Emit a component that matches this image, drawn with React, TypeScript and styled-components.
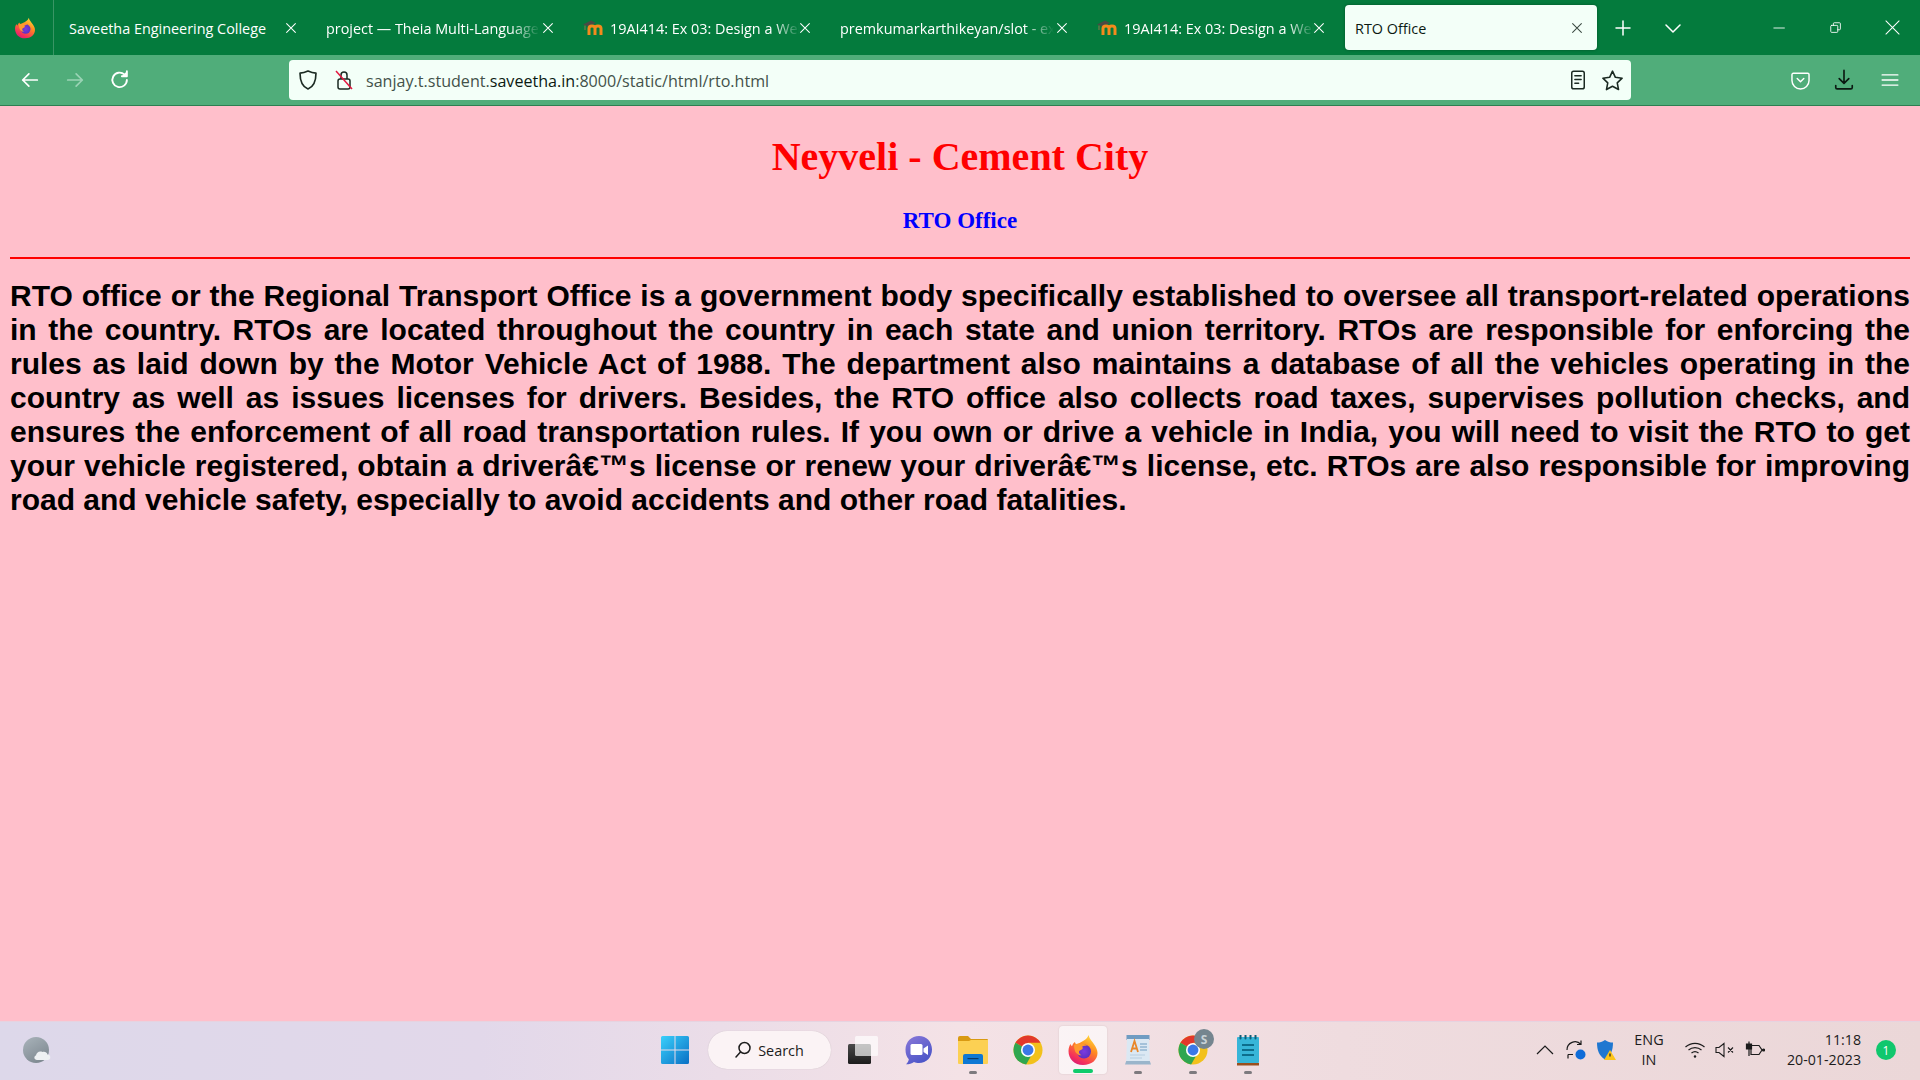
import styled, { createGlobalStyle } from "styled-components";
import { ReactNode } from "react";

const GlobalStyle = createGlobalStyle`
  html, body {
    margin: 0;
    padding: 0;
    height: 100%;
    overflow: hidden;
  }
`;

const UI_FONT = `"Open Sans", "Noto Sans", sans-serif`;

const Screen = styled.div`
  display: flex;
  flex-direction: column;
  width: 1920px;
  height: 1080px;
  font-family: ${UI_FONT};
`;

const TabStrip = styled.div`
  display: flex;
  align-items: flex-start;
  height: 55px;
  background-color: #047b3d;
  flex-shrink: 0;
`;

const BrandCell = styled.div`
  display: flex;
  align-items: center;
  justify-content: center;
  width: 50px;
  height: 55px;
  padding-right: 3px;
  margin-right: 3px;
  border-right: 1px solid #3a9565;
`;

const Tab = styled.div<{ $active?: boolean }>`
  position: relative;
  display: flex;
  align-items: center;
  width: ${({ $active }) => ($active ? "252px" : "257px")};
  height: 45px;
  margin-top: 5px;
  margin-left: ${({ $active }) => ($active ? "3px" : "0")};
  padding-left: ${({ $active }) => ($active ? "10px" : "12px")};
  padding-top: 1px;
  box-sizing: border-box;
  color: ${({ $active }) => ($active ? "#0b1a12" : "#fff")};
  background-color: ${({ $active }) => ($active ? "#f3fff8" : "transparent")};
  border-radius: 4px;
  box-shadow: ${({ $active }) => ($active ? "0 0 3px rgba(0,0,0,.35)" : "none")};
  font-size: 14.4px;
  flex-shrink: 0;
`;

const TabFavicon = styled.span`
  display: flex;
  margin-right: 7px;
`;

const TabTitle = styled.span<{ $width?: number }>`
  display: block;
  width: ${({ $width }) => ($width ? `${$width}px` : "auto")};
  overflow: hidden;
  white-space: nowrap;
  ${({ $width }) =>
    $width
      ? `-webkit-mask-image: linear-gradient(to right, #000 86%, transparent 100%);
         mask-image: linear-gradient(to right, #000 86%, transparent 100%);`
      : ""}
`;

const TabClose = styled.span<{ $active?: boolean }>`
  position: absolute;
  left: ${({ $active }) => ($active ? "225px" : "227px")};
  top: 16px;
  display: flex;
`;

const StripButton = styled.div<{ $width: number }>`
  display: flex;
  align-items: center;
  justify-content: center;
  width: ${({ $width }) => $width}px;
  height: 45px;
  margin-top: 5px;
  flex-shrink: 0;
`;

const StripSpacer = styled.div`
  flex: 1;
`;

const WindowButton = styled.div`
  display: flex;
  align-items: center;
  justify-content: center;
  width: 56px;
  height: 55px;
`;

const Toolbar = styled.div`
  display: flex;
  align-items: center;
  height: 51px;
  padding: 0 8px;
  box-sizing: border-box;
  background-color: #50ad7a;
  border-bottom: 1px solid #2d7f52;
  flex-shrink: 0;
`;

const NavButton = styled.div`
  display: flex;
  align-items: center;
  justify-content: center;
  width: 44px;
  height: 40px;
  margin-right: 1px;
  flex-shrink: 0;
`;

const UrlBar = styled.div`
  display: flex;
  align-items: center;
  width: 1342px;
  height: 40px;
  margin-left: 146px;
  margin-right: 147px;
  padding: 0 2px 0 7px;
  box-sizing: border-box;
  background-color: #f3fff8;
  border-radius: 4px;
  flex-shrink: 0;
`;

const UrlIcon = styled.div<{ $width: number; $gap?: number }>`
  display: flex;
  align-items: center;
  justify-content: center;
  width: ${({ $width }) => $width}px;
  margin-left: ${({ $gap }) => $gap ?? 0}px;
  flex-shrink: 0;
`;

const UrlText = styled.div`
  flex: 1;
  margin-left: 4px;
  padding-top: 2px;
  color: #43524a;
  font-size: 16.1px;
  white-space: nowrap;

  strong {
    color: #0b1a12;
    font-weight: 400;
  }
`;

const ToolbarButton = styled.div`
  display: flex;
  align-items: center;
  justify-content: center;
  width: 44px;
  height: 40px;
  flex-shrink: 0;

  &:last-child {
    margin-left: 2px;
  }
`;

const Page = styled.main`
  flex: 1;
  padding: 0 10px;
  overflow: hidden;
  background-color: #ffbfcb;
  color: #000;
`;

const Heading = styled.h1`
  margin: 28px 0 27px;
  color: #f00;
  font-family: "Liberation Serif", serif;
  font-size: 40px;
  font-weight: 700;
  line-height: 46px;
  text-align: center;
`;

const SubHeading = styled.h2`
  margin: 0 0 23px;
  color: #00f;
  font-family: "Liberation Serif", serif;
  font-size: 23px;
  font-weight: 700;
  line-height: 27px;
  text-align: center;
`;

const Rule = styled.hr`
  height: 2px;
  margin: 0 0 20px;
  padding: 0;
  background-color: #f00;
  border: none;
`;

const Paragraph = styled.p`
  margin: 0;
  font-family: "Liberation Sans", Arial, sans-serif;
  font-size: 30px;
  font-weight: 700;
  line-height: 34px;
  text-align: justify;
`;

const Taskbar = styled.footer`
  display: grid;
  grid-template-columns: 1fr auto 1fr;
  align-items: center;
  height: 59px;
  padding-bottom: 2px;
  background: linear-gradient(90deg, #ddd8ea 0%, #e2d8ea 25%, #f4e2e6 50%, #efdcdf 70%, #ebd7d8 100%);
  border-top: 1px solid #e6d3e0;
  box-sizing: border-box;
  flex-shrink: 0;
`;

const TaskLeft = styled.div`
  display: flex;
  align-items: center;
  padding-left: 23px;
`;

const TaskCenter = styled.div`
  display: flex;
  align-items: center;
  gap: 7px;
  margin-left: 2px;
`;

const TaskIcon = styled.div<{ $active?: boolean; $running?: boolean }>`
  position: relative;
  display: flex;
  align-items: center;
  justify-content: center;
  width: 48px;
  height: 48px;
  border-radius: 4px;
  background-color: ${({ $active }) => ($active ? "rgba(255,255,255,.62)" : "transparent")};
  box-shadow: ${({ $active }) => ($active ? "0 0 2px rgba(0,0,0,.12)" : "none")};

  &::after {
    content: "";
    display: ${({ $running }) => ($running ? "block" : "none")};
    position: absolute;
    left: 50%;
    bottom: ${({ $active }) => ($active ? "1px" : "0")};
    width: ${({ $active }) => ($active ? "20px" : "8px")};
    height: ${({ $active }) => ($active ? "4px" : "3px")};
    transform: translateX(-50%);
    border-radius: 2px;
    background-color: ${({ $active }) => ($active ? "#0ecb6b" : "#7d7a7e")};
  }
`;

const IconBadge = styled.svg`
  position: absolute;
  right: 3px;
  top: 3px;
`;

const SearchPill = styled.div`
  display: flex;
  align-items: center;
  justify-content: center;
  gap: 6px;
  width: 123px;
  height: 38px;
  margin-left: 2px;
  margin-right: 1px;
  color: #1c1c1c;
  font-size: 14.4px;
  background-color: #fbf3f5;
  border-radius: 19px;
  box-shadow: 0 0 1px rgba(0,0,0,.2);
`;

const TaskRight = styled.div`
  display: flex;
  align-items: center;
  justify-content: flex-end;
  padding-right: 24px;
  color: #1c1c1c;
`;

const TrayIcon = styled.div<{ $width: number; $gap?: number }>`
  display: flex;
  align-items: center;
  justify-content: center;
  width: ${({ $width }) => $width}px;
  height: 32px;
  margin-left: ${({ $gap }) => $gap ?? 0}px;
  flex-shrink: 0;
`;

const Lang = styled.div`
  width: 48px;
  margin: 0 10px 0 4px;
  font-size: 14.4px;
  line-height: 20px;
  text-align: center;
`;

const Clock = styled.div`
  margin-left: 20px;
  font-size: 14.2px;
  line-height: 20px;
  text-align: right;
`;

const Badge = styled.div`
  display: flex;
  align-items: center;
  justify-content: center;
  width: 20px;
  height: 20px;
  margin-left: 15px;
  color: #fff;
  font-size: 12px;
  background-color: #10c76d;
  border-radius: 50%;
`;

function Stroke({ size = 16, color = "#fff", width = 1.5, children }: { size?: number; color?: string; width?: number; children: ReactNode }) {
  return (
    <svg width={size} height={size} viewBox="0 0 16 16" fill="none" stroke={color} strokeWidth={width} strokeLinecap="round" strokeLinejoin="round">
      {children}
    </svg>
  );
}

function CloseIcon({ color = "#fff" }: { color?: string }) {
  return (
    <Stroke size={14} color={color} width={1.2}>
      <path d="M3 3l10 10M13 3L3 13" />
    </Stroke>
  );
}

function FirefoxIcon({ size, id }: { size: number; id: string }) {
  return (
    <svg width={size} height={size} viewBox="0 0 32 32">
      <defs>
        <linearGradient id={`${id}a`} x1="0.8" y1="0" x2="0.25" y2="1">
          <stop offset="0" stopColor="#ffe13d" />
          <stop offset="0.4" stopColor="#ff8a20" />
          <stop offset="0.8" stopColor="#f5325a" />
          <stop offset="1" stopColor="#d91a78" />
        </linearGradient>
        <radialGradient id={`${id}b`} cx="0.5" cy="0.5" r="0.55">
          <stop offset="0" stopColor="#7a3be0" />
          <stop offset="1" stopColor="#5a2fc0" />
        </radialGradient>
      </defs>
      <path d="M21.500 1c.8 4 4 6.500 6 10 1.500 2.500 3 4.500 3 8 0 7-6 12-14.500 12S1.500 25 1.500 17c0-3 1-5.500 2-7 .3 1 .8 1.800 1.500 2.300.5-1.800 1.500-3.300 3-4.300 0 1.200.8 2.200 2 2.500C14.500 7.500 20 6 21.500 1z" fill={`url(#${id}a)`} />
      <circle cx="17" cy="17.500" r="7" fill={`url(#${id}b)`} />
      <path d="M7 11c3-1.500 6.500-1.800 9.500-1 1.800.4 3.200 1.200 4.200 2.300-2-.8-4.200-.6-5.700.4 1 .8 1 1.500.3 2.300-1 1-3 1.200-3.300 2.500-.3 1.500.8 3 2.500 3.800-3 .2-6-2-6.800-5.300C7.200 14.200 7 12.500 7 11z" fill="#ff9a2e" />
    </svg>
  );
}

function MoodleIcon() {
  return (
    <svg width="20" height="16" viewBox="0 0 20 16">
      <path d="M0 4.500L8 0.500l5 2.500L5 6.500z" fill="#4a4a44" />
      <path d="M2 5.500V10" stroke="#8a7a4a" strokeWidth="1" />
      <path d="M6 15V8.500c0-3.500 6-3.500 6 0V15M12 15V8.500c0-3.500 6-3.500 6 0V15" fill="none" stroke="#f48a1c" strokeWidth="3" />
    </svg>
  );
}

function ChromeIcon() {
  return (
    <svg width="30" height="30" viewBox="0 0 32 32">
      <circle cx="16" cy="16" r="15.500" fill="#f2c11c" />
      <path d="M16 16L2.600 8.250A15.500 15.500 0 0 1 29.400 8.250H16z" fill="#e2382b" />
      <path d="M16 16L2.600 8.250A15.500 15.500 0 0 0 14 31.400L20.600 20z" fill="#2fa650" />
      <circle cx="16" cy="16" r="7.500" fill="#fff" />
      <circle cx="16" cy="16" r="5.800" fill="#3b78e7" />
    </svg>
  );
}

function WindowsIcon() {
  return (
    <svg width="30" height="30" viewBox="0 0 30 30">
      <defs>
        <linearGradient id="win" x1="0" y1="0" x2="1" y2="1">
          <stop offset="0" stopColor="#3ad0fb" />
          <stop offset="1" stopColor="#0a6fc4" />
        </linearGradient>
      </defs>
      <path d="M1 2.500A1.500 1.500 0 0 1 2.500 1H14.500V14.500H1zM15.500 1H27.500A1.500 1.500 0 0 1 29 2.500V14.500H15.500zM1 15.500H14.500V29H2.500A1.500 1.500 0 0 1 1 27.500zM15.500 15.500H29V27.500A1.500 1.500 0 0 1 27.500 29H15.500z" fill="url(#win)" />
    </svg>
  );
}

function TaskViewIcon() {
  return (
    <svg width="30" height="28" viewBox="0 0 30 28">
      <defs>
        <linearGradient id="tv" x1="0" y1="0" x2="0" y2="1">
          <stop offset="0" stopColor="#4a4a4a" />
          <stop offset="1" stopColor="#1c1c1c" />
        </linearGradient>
      </defs>
      <rect x="0" y="8" width="23" height="20" rx="1.500" fill="url(#tv)" />
      <rect x="7" y="0" width="23" height="20" rx="1.500" fill="#fff" fillOpacity=".68" />
    </svg>
  );
}

function ChatIcon() {
  return (
    <svg width="30" height="30" viewBox="0 0 30 30">
      <defs>
        <linearGradient id="chat" x1="0" y1="0" x2="0.6" y2="1">
          <stop offset="0" stopColor="#8a78d8" />
          <stop offset="1" stopColor="#4b55c8" />
        </linearGradient>
      </defs>
      <path d="M16 1c7.500 0 13 5.800 13 13.500S23.500 28 16 28c-2 0-3.500-.2-5-1-2 1.500-5 2.300-8 2.300 1.500-1.300 2.500-3 2.800-5C3.500 22 2.500 18.500 2.500 14.500 2.500 6.800 8.500 1 16 1z" fill="url(#chat)" />
      <rect x="7.500" y="9" width="12" height="11" rx="1.500" fill="#fff" />
      <path d="M20.500 13.500l4.500-3v9.500l-4.500-3z" fill="#fff" />
    </svg>
  );
}

function FolderIcon() {
  return (
    <svg width="30" height="28" viewBox="0 0 30 28">
      <path d="M0 2a2 2 0 0 1 2-2h8l3 3h16a1 1 0 0 1 1 1v4H0z" fill="#d99a12" />
      <path d="M0 5h11l2-1h17v23a1 1 0 0 1-1 1H1a1 1 0 0 1-1-1z" fill="#fcd053" />
      <path d="M5 20a2 2 0 0 1 2-2h16a2 2 0 0 1 2 2v8H5z" fill="#0f78d4" />
      <rect x="9.500" y="22" width="11" height="1.200" fill="#0a3a6b" />
    </svg>
  );
}

function WordpadIcon() {
  return (
    <svg width="26" height="30" viewBox="0 0 26 30">
      <rect x="1.500" y="0" width="23" height="5" fill="#6f9cc2" />
      <path d="M2 4h22l.8 22H1.200z" fill="#dbe8f3" />
      <path d="M1.200 26h23.600l1.200 3.500H0z" fill="#9ab5cb" />
      <path d="M6 17L9.500 6 13 17M7.200 13.500h4.600" fill="none" stroke="#e9872a" strokeWidth="1.800" />
      <path d="M15 9h7M15 12h7M15 15h7" stroke="#6f9cc2" strokeWidth="1.200" />
      <path d="M5 20h15M5 23h12" stroke="#b6cde0" strokeWidth="1" />
    </svg>
  );
}

function NotepadIcon() {
  return (
    <svg width="24" height="31" viewBox="0 0 24 31">
      <rect x="1" y="2" width="22" height="26" rx="1" fill="#37b5d8" />
      <path d="M4.500 0.500v3M9.500 0.500v3M14.500 0.500v3M19.500 0.500v3" stroke="#0e5f78" strokeWidth="2" strokeLinecap="round" />
      <path d="M6 10h12M6 15h12M6 20h12" stroke="#0d6d8c" strokeWidth="2" />
      <rect x="1" y="28" width="22" height="2.500" fill="#9a4f1e" />
    </svg>
  );
}

function WeatherIcon() {
  return (
    <svg width="32" height="30" viewBox="0 0 32 30">
      <defs>
        <linearGradient id="moon" x1="0" y1="0" x2="0.6" y2="1">
          <stop offset="0" stopColor="#aab4bb" />
          <stop offset="1" stopColor="#7f8a92" />
        </linearGradient>
      </defs>
      <circle cx="13" cy="15" r="13" fill="url(#moon)" />
      <path d="M14 25c-3 0-3.500-4-1-4.500.2-3 3.500-5 6.500-3.500 2-.8 4.500.3 5 2.500 3.500 0 4 5.500 0 5.500z" fill="#eef1f3" />
    </svg>
  );
}

const TABS = [
  { title: "Saveetha Engineering College" },
  { title: "project — Theia Multi-Language", fadeWidth: 214 },
  { title: "19AI414: Ex 03: Design a Website", fadeWidth: 190, moodle: true },
  { title: "premkumarkarthikeyan/slot - ex03", fadeWidth: 214 },
  { title: "19AI414: Ex 03: Design a Website", fadeWidth: 190, moodle: true },
];

function App() {
  return (
    <Screen>
      <GlobalStyle />

      <TabStrip>
        <BrandCell>
          <FirefoxIcon size={22} id="ffa" />
        </BrandCell>

        {TABS.map((tab, index) => (
          <Tab key={index}>
            {tab.moodle && (
              <TabFavicon>
                <MoodleIcon />
              </TabFavicon>
            )}
            <TabTitle $width={tab.fadeWidth}>{tab.title}</TabTitle>
            <TabClose>
              <CloseIcon />
            </TabClose>
          </Tab>
        ))}

        <Tab $active>
          <TabTitle>RTO Office</TabTitle>
          <TabClose $active>
            <CloseIcon color="#3b4a42" />
          </TabClose>
        </Tab>

        <StripButton $width={52}>
          <Stroke size={16}>
            <path d="M8 1v14M1 8h14" />
          </Stroke>
        </StripButton>
        <StripButton $width={48}>
          <Stroke size={16}>
            <path d="M1 5l7 7 7-7" />
          </Stroke>
        </StripButton>

        <StripSpacer />

        <WindowButton>
          <Stroke size={14} width={1}>
            <path d="M1 8h12" />
          </Stroke>
        </WindowButton>
        <WindowButton>
          <Stroke size={14} width={1}>
            <rect x="2" y="5" width="8" height="8" rx="1" />
            <path d="M5 5V3a1 1 0 0 1 1-1h6a1 1 0 0 1 1 1v6a1 1 0 0 1-1 1h-2" />
          </Stroke>
        </WindowButton>
        <WindowButton>
          <Stroke size={15} width={1.1}>
            <path d="M1 1l14 14M15 1L1 15" />
          </Stroke>
        </WindowButton>
      </TabStrip>

      <Toolbar>
        <NavButton>
          <Stroke size={18}>
            <path d="M14.500 8H1.500M7 2.500L1.500 8 7 13.500" />
          </Stroke>
        </NavButton>
        <NavButton>
          <Stroke size={18} color="#9ad3b5">
            <path d="M1.500 8h13M9 2.500L14.500 8 9 13.500" />
          </Stroke>
        </NavButton>
        <NavButton>
          <Stroke size={20}>
            <path d="M13.500 8A5.800 5.800 0 1 1 11.500 3.500" />
            <path d="M13.500 1v4h-4" fill="#fff" />
          </Stroke>
        </NavButton>

        <UrlBar>
          <UrlIcon $width={24}>
            <Stroke size={22} color="#1b2a22" width={1.2}>
              <path d="M8 1.500c2 1 4 1.500 5.800 1.500 0 5-1 9.500-5.800 11.500C3.200 12.500 2.200 8 2.200 3 4 3 6 2.500 8 1.500z" />
            </Stroke>
          </UrlIcon>
          <UrlIcon $width={36} $gap={6}>
            <svg width="20" height="22" viewBox="0 0 20 22" fill="none">
              <rect x="4" y="10" width="12" height="10" rx="2" stroke="#1b2a22" strokeWidth="1.500" />
              <path d="M7 10V6a3 3 0 0 1 6 0v4" stroke="#1b2a22" strokeWidth="1.500" />
              <path d="M2 2l16 18" stroke="#e4163f" strokeWidth="1.500" />
            </svg>
          </UrlIcon>
          <UrlText>
            sanjay.t.student.<strong>saveetha.in</strong>:8000/static/html/rto.html
          </UrlText>
          <UrlIcon $width={34}>
            <Stroke size={20} color="#1b2a22" width={1.2}>
              <rect x="3" y="1" width="10" height="14" rx="1.500" />
              <path d="M5.500 4.500h5M5.500 7.500h5M5.500 10.500h3" />
            </Stroke>
          </UrlIcon>
          <UrlIcon $width={34}>
            <Stroke size={23} color="#1b2a22" width={1.1}>
              <path d="M8 1.500l2 4.300 4.700.6-3.400 3.200.9 4.700L8 12l-4.200 2.300.9-4.700L1.300 6.400 6 5.800z" />
            </Stroke>
          </UrlIcon>
        </UrlBar>

        <ToolbarButton>
          <Stroke size={21} width={1.1}>
            <path d="M2.500 2.500h11a1 1 0 0 1 1 1V8a6.500 6.500 0 0 1-13 0V3.500a1 1 0 0 1 1-1z" />
            <path d="M5.500 6.500L8 9l2.500-2.500" />
          </Stroke>
        </ToolbarButton>
        <ToolbarButton>
          <Stroke size={22} color="#0b1a12" width={1.2}>
            <path d="M8 1v9M4.500 7L8 10.500 11.500 7M2 12v1.500a1 1 0 0 0 1 1h10a1 1 0 0 0 1-1V12" />
          </Stroke>
        </ToolbarButton>
        <ToolbarButton>
          <Stroke size={18} width={1.2}>
            <path d="M1 3.500h14M1 8h14M1 12.500h14" />
          </Stroke>
        </ToolbarButton>
      </Toolbar>

      <Page>
        <Heading>Neyveli - Cement City</Heading>
        <SubHeading>RTO Office</SubHeading>
        <Rule />
        <Paragraph>
          RTO office or the Regional Transport Office is a government body specifically established to oversee all
          transport-related operations in the country. RTOs are located throughout the country in each state and union
          territory. RTOs are responsible for enforcing the rules as laid down by the Motor Vehicle Act of 1988. The
          department also maintains a database of all the vehicles operating in the country as well as issues licenses
          for drivers. Besides, the RTO office also collects road taxes, supervises pollution checks, and ensures the
          enforcement of all road transportation rules. If you own or drive a vehicle in India, you will need to visit
          the RTO to get your vehicle registered, obtain a driverâ€™s license or renew your driverâ€™s license, etc.
          RTOs are also responsible for improving road and vehicle safety, especially to avoid accidents and other road
          fatalities.
        </Paragraph>
      </Page>

      <Taskbar>
        <TaskLeft>
          <WeatherIcon />
        </TaskLeft>

        <TaskCenter>
          <TaskIcon>
            <WindowsIcon />
          </TaskIcon>
          <SearchPill>
            <svg width="18" height="18" viewBox="0 0 18 18" fill="none" stroke="#1c1c1c" strokeWidth="1.500">
              <circle cx="10.500" cy="7" r="5.500" />
              <path d="M6.500 11L2 16" strokeLinecap="round" />
            </svg>
            Search
          </SearchPill>
          <TaskIcon>
            <TaskViewIcon />
          </TaskIcon>
          <TaskIcon>
            <ChatIcon />
          </TaskIcon>
          <TaskIcon $running>
            <FolderIcon />
          </TaskIcon>
          <TaskIcon>
            <ChromeIcon />
          </TaskIcon>
          <TaskIcon $active $running>
            <FirefoxIcon size={32} id="ffb" />
          </TaskIcon>
          <TaskIcon $running>
            <WordpadIcon />
          </TaskIcon>
          <TaskIcon $running>
            <ChromeIcon />
            <IconBadge width="20" height="20" viewBox="0 0 20 20">
              <circle cx="10" cy="10" r="10" fill="#75858f" />
              <text x="10" y="14.500" fontSize="12" fontFamily="Open Sans" fontWeight="700" textAnchor="middle" fill="#c9d2d7">S</text>
            </IconBadge>
          </TaskIcon>
          <TaskIcon $running>
            <NotepadIcon />
          </TaskIcon>
        </TaskCenter>

        <TaskRight>
          <TrayIcon $width={22}>
            <svg width="20" height="12" viewBox="0 0 20 12" fill="none" stroke="#1c1c1c" strokeWidth="1.200">
              <path d="M2 10l8-8 8 8" />
            </svg>
          </TrayIcon>
          <TrayIcon $width={30} $gap={5}>
            <svg width="22" height="22" viewBox="0 0 22 22" fill="none" stroke="#1c1c1c" strokeWidth="1.200">
              <path d="M2 11a8 8 0 0 1 14-5.500M16 1.500v4h-4M3 15.500h5M3 15.500v4" />
              <circle cx="15.500" cy="15.500" r="5" fill="#0f6cd8" stroke="none" />
            </svg>
          </TrayIcon>
          <TrayIcon $width={30}>
            <svg width="22" height="22" viewBox="0 0 22 22">
              <path d="M10 1c3 2 5 2.500 8 2.500 0 8-2 13-8 17-6-4-8-9-8-17C5 3.500 7 3 10 1z" fill="#1f77d0" />
              <path d="M15 11l6 10H9z" fill="#fcc419" />
              <path d="M15 14.500v3" stroke="#1c1c1c" strokeWidth="1.200" />
            </svg>
          </TrayIcon>
          <Lang>
            ENG
            <br />
            IN
          </Lang>
          <TrayIcon $width={24}>
            <svg width="22" height="18" viewBox="0 0 22 18" fill="none" stroke="#1c1c1c" strokeWidth="1.200">
              <path d="M1.500 6a14 14 0 0 1 19 0M4.500 9a10 10 0 0 1 13 0M7.500 12a5.500 5.500 0 0 1 7 0" />
              <circle cx="11" cy="15.500" r="1.200" fill="#1c1c1c" stroke="none" />
            </svg>
          </TrayIcon>
          <TrayIcon $width={24} $gap={6}>
            <svg width="20" height="16" viewBox="0 0 20 16" fill="none" stroke="#1c1c1c" strokeWidth="1.100">
              <path d="M1 5.500h3L9 1.500v13l-5-4H1zM13 5.500l5 5M18 5.500l-5 5" />
            </svg>
          </TrayIcon>
          <TrayIcon $width={24} $gap={6}>
            <svg width="20" height="18" viewBox="0 0 20 18" fill="none" stroke="#1c1c1c" strokeWidth="1.200">
              <path d="M6 4.500h8l3 4.500-3 4.500H6z" />
              <path d="M1.500 3h5v5h-5zM4 0.500V3M4 8v7" fill="#1c1c1c" />
              <circle cx="18.500" cy="9" r="1" fill="#1c1c1c" />
            </svg>
          </TrayIcon>
          <Clock>
            11:18
            <br />
            20-01-2023
          </Clock>
          <Badge>1</Badge>
        </TaskRight>
      </Taskbar>
    </Screen>
  );
}

export default App;
